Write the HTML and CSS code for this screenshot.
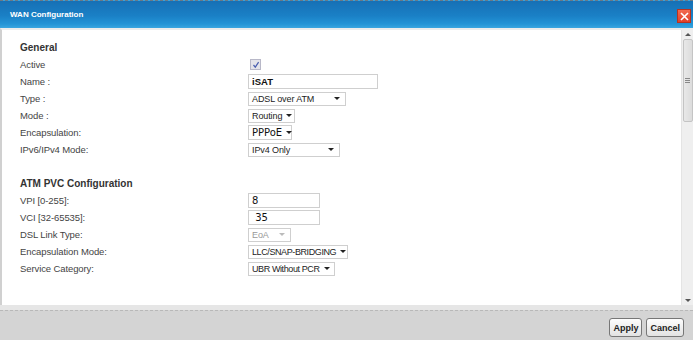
FILE: index.html
```html
<!DOCTYPE html>
<html lang="en">
<head>
  <meta charset="UTF-8">
  <title>WAN Configuration</title>
  <link rel="stylesheet" href="styles.css">
</head>
<body>
  <div class="dialog">
    <div class="titlebar">
      <span class="title">WAN Configuration</span>
      <span class="close">
        <svg width="9" height="9" viewBox="0 0 9 9"><path d="M1 1 L8 8 M8 1 L1 8" stroke="#fff" stroke-width="1.6"/></svg>
      </span>
    </div>
    <div class="body">
      <div class="content">
        <h2>General</h2>
        <div class="row">
          <span class="label">Active</span>
          <span class="check">
            <svg width="8" height="8" viewBox="0 0 8 8"><path d="M1.5 4 L3.3 6.2 L6.6 1.2" stroke="#4a5fb0" stroke-width="1.2" fill="none"/></svg>
          </span>
        </div>
        <div class="row">
          <span class="label">Name :</span>
          <span class="input name bold">iSAT</span>
        </div>
        <div class="row">
          <span class="label">Type :</span>
          <span class="select w98">ADSL over ATM<i class="arrow"></i></span>
        </div>
        <div class="row">
          <span class="label">Mode :</span>
          <span class="select w47">Routing<i class="arrow"></i></span>
        </div>
        <div class="row">
          <span class="label">Encapsulation:</span>
          <span class="select w44 big">PPPoE<i class="arrow"></i></span>
        </div>
        <div class="row">
          <span class="label">IPv6/IPv4 Mode:</span>
          <span class="select w92">IPv4 Only<i class="arrow"></i></span>
        </div>

        <h2 class="section">ATM PVC Configuration</h2>
        <div class="row">
          <span class="label">VPI [0-255]:</span>
          <span class="input short big">8</span>
        </div>
        <div class="row">
          <span class="label">VCI [32-65535]:</span>
          <span class="input short big">&nbsp;35</span>
        </div>
        <div class="row">
          <span class="label">DSL Link Type:</span>
          <span class="select w43 disabled">EoA<i class="arrow"></i></span>
        </div>
        <div class="row">
          <span class="label">Encapsulation Mode:</span>
          <span class="select w100 tight">LLC/SNAP-BRIDGING<i class="arrow"></i></span>
        </div>
        <div class="row">
          <span class="label">Service Category:</span>
          <span class="select w87 tight">UBR Without PCR<i class="arrow"></i></span>
        </div>
      </div>
      <div class="scrollbar">
        <span class="sb-up"></span>
        <span class="sb-thumb"><i></i></span>
        <span class="sb-space"></span>
        <span class="sb-down"></span>
      </div>
    </div>
    <div class="footer">
      <button class="btn">Apply</button>
      <button class="btn">Cancel</button>
    </div>
  </div>
</body>
</html>
```

FILE: styles.css
```css
body {
  margin: 0;
  background: #fff;
  font-family: 'Liberation Sans', Arial, sans-serif;
  color: #3a3a3a;
}
.dialog {
  width: 693px;
  height: 340px;
  display: flex;
  flex-direction: column;
}
.titlebar {
  height: 27px;
  flex: none;
  border-top: 1px dashed #6a7a88;
  background: linear-gradient(#1670b5 0%, #1a80c6 55%, #2394d6 85%, #3aa6e0 100%);
  display: flex;
  align-items: center;
  justify-content: space-between;
  padding: 0 2px 0 10px;
}
.title {
  color: #fff;
  font-weight: bold;
  font-size: 8px;
}
.close {
  width: 12px;
  height: 12px;
  margin-top: 3px;
  background: linear-gradient(#f26a50, #e0402a);
  border: 1px solid #b8321f;
  display: flex;
  align-items: center;
  justify-content: center;
}
.body {
  flex: 1;
  display: flex;
  border-left: 2px solid #d0d0d0;
  border-top: 2px solid #ececec;
  min-height: 0;
}
.content {
  flex: 1;
  padding: 12px 0 0 18px;
}
h2 {
  margin: 0 0 2px;
  height: 12px;
  line-height: 12px;
  font-size: 10px;
  font-weight: bold;
  color: #333;
}
h2.section {
  margin-top: 20px;
}
.row {
  height: 17px;
  display: flex;
  align-items: center;
}
.label {
  width: 228px;
  flex: none;
  font-size: 9.5px;
  letter-spacing: -0.1px;
  color: #444;
}
.check {
  width: 9px;
  height: 9px;
  margin-left: 2px;
  border: 1px solid #b8b8c8;
  background: #e4e4ea;
  display: flex;
  align-items: center;
  justify-content: center;
}
.input {
  height: 13px;
  border: 1px solid #cfcfcf;
  box-sizing: content-box;
  padding: 0 3px;
  font-size: 9.5px;
  line-height: 13px;
  color: #111;
  background: #fff;
}
.input.name {
  width: 122px;
}
.input.short {
  width: 64px;
}
.bold {
  font-weight: bold;
}
.select {
  height: 14px;
  box-sizing: border-box;
  border: 1px solid #cfcfcf;
  padding: 0 3px;
  font-size: 9px;
  letter-spacing: -0.1px;
  line-height: 12px;
  white-space: nowrap;
  color: #222;
  background: #fff;
  display: flex;
  align-items: center;
  justify-content: space-between;
}
.select.tight {
  letter-spacing: -0.4px;
}
.big {
  font-family: 'DejaVu Sans', sans-serif;
  font-size: 10px;
  letter-spacing: 0;
  color: #111;
}
.select.big {
  height: 15px;
}
.select.disabled {
  color: #999;
}
.select.disabled .arrow {
  border-top-color: #bbb;
}
.arrow {
  width: 0;
  height: 0;
  border-left: 3px solid transparent;
  border-right: 3px solid transparent;
  border-top: 3px solid #222;
  margin: 0 2px 0 4px;
}
.w98 { width: 98px; }
.w47 { width: 47px; }
.w44 { width: 44px; }
.w92 { width: 92px; }
.w43 { width: 43px; }
.w100 { width: 100px; }
.w87 { width: 87px; }
.scrollbar {
  width: 11px;
  flex: none;
  background: #efefef;
  border-left: 1px solid #e4e4e4;
  display: flex;
  flex-direction: column;
  align-items: center;
}
.sb-up, .sb-down {
  height: 9px;
  flex: none;
  display: flex;
  align-items: center;
}
.sb-up::before, .sb-down::before {
  content: "";
  border-left: 3px solid transparent;
  border-right: 3px solid transparent;
}
.sb-up::before {
  border-bottom: 3px solid #555;
}
.sb-down::before {
  border-top: 3px solid #555;
}
.sb-thumb {
  width: 10px;
  height: 83px;
  flex: none;
  box-sizing: border-box;
  border: 1px solid #c4c4c4;
  border-radius: 2px;
  background: linear-gradient(90deg, #e8e8e8, #dcdcdc);
  display: flex;
  align-items: center;
  justify-content: center;
}
.sb-thumb i {
  width: 5px;
  height: 5px;
  background: repeating-linear-gradient(#888 0 1px, transparent 1px 2px);
}
.sb-space {
  flex: 1;
}
.footer {
  height: 35px;
  flex: none;
  box-sizing: border-box;
  border-top: 5px solid #e6e6e6;
  background: #d4d4d4;
  display: flex;
  align-items: flex-end;
  justify-content: flex-end;
  gap: 4px;
  padding: 0 9px 3px 0;
  position: relative;
}
.footer::before {
  content: "";
  position: absolute;
  top: 0;
  left: 0;
  right: 0;
  border-top: 1px dashed #b8b8b8;
}
.btn {
  height: 19px;
  padding: 0 3px;
  font-family: 'Liberation Sans', Arial, sans-serif;
  font-size: 9px;
  font-weight: bold;
  color: #222;
  border: 1px solid #777;
  border-radius: 3px;
  background: linear-gradient(#fdfdfd, #e2e2e2);
}
```
